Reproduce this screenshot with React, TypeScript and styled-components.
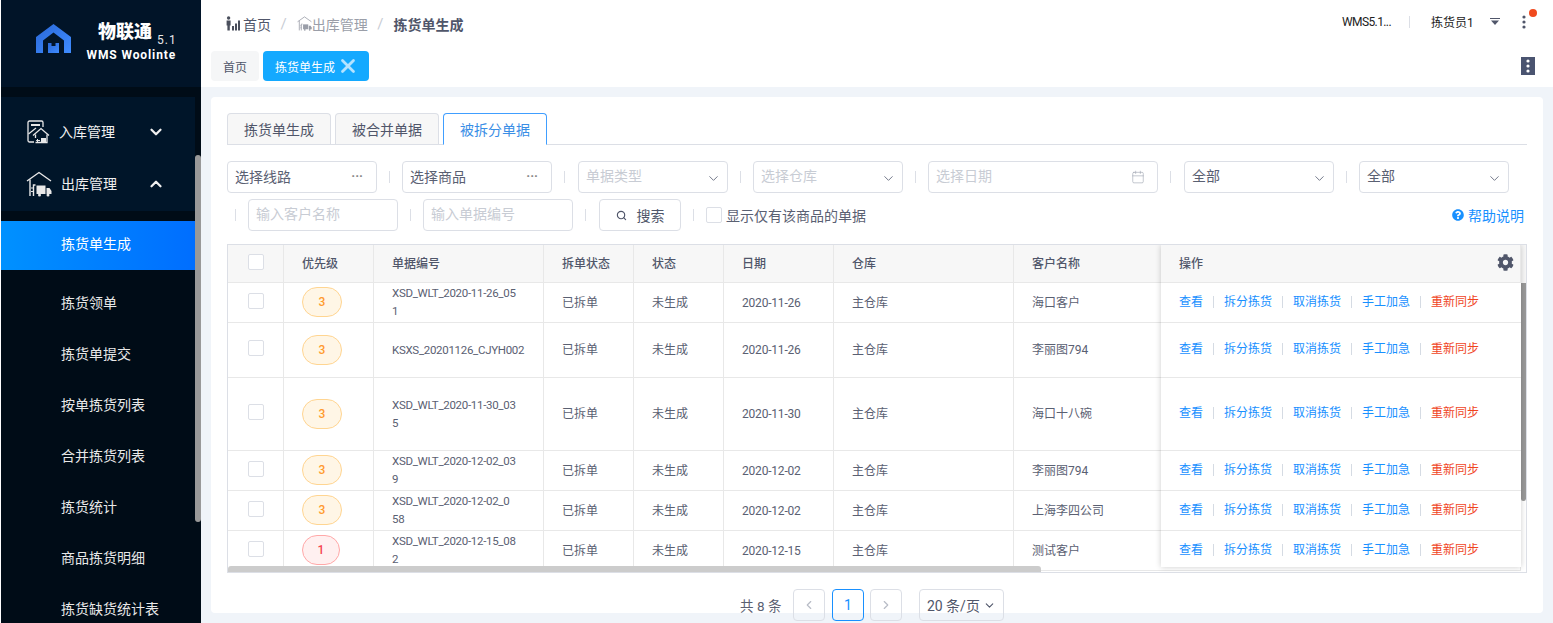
import React from 'react';
import styled, { createGlobalStyle } from 'styled-components';
import { Calendar, ChevronDown, ChevronLeft, ChevronRight, ChevronUp, Search, X } from 'lucide-react';
import { FaCog, FaQuestionCircle } from 'react-icons/fa';

const GlobalStyle = createGlobalStyle`
  html, body {
    margin: 0;
    padding: 0;
    height: 100%;
    overflow: hidden;
    background: #fff;
  }
  body {
    font-family: Roboto, "Noto Sans CJK SC", sans-serif;
    font-size: 14px;
    color: #50566a;
  }
  * {
    box-sizing: border-box;
  }
`;

interface Row {
  level: number;
  code: string;
  date: string;
  customer: string;
  height: number;
}

const rows: Row[] = [
  { level: 3, code: 'XSD_WLT_2020-11-26_05\n1', date: '2020-11-26', customer: '海口客户', height: 40 },
  { level: 3, code: 'KSXS_20201126_CJYH002', date: '2020-11-26', customer: '李丽图794', height: 55 },
  { level: 3, code: 'XSD_WLT_2020-11-30_03\n5', date: '2020-11-30', customer: '海口十八碗', height: 73 },
  { level: 3, code: 'XSD_WLT_2020-12-02_03\n9', date: '2020-12-02', customer: '李丽图794', height: 40 },
  { level: 3, code: 'XSD_WLT_2020-12-02_0\n58', date: '2020-12-02', customer: '上海李四公司', height: 40 },
  { level: 1, code: 'XSD_WLT_2020-12-15_08\n2', date: '2020-12-15', customer: '测试客户', height: 40 },
];

const subMenu = ['拣货领单', '拣货单提交', '按单拣货列表', '合并拣货列表', '拣货统计', '商品拣货明细', '拣货缺货统计表'];
const actions = ['查看', '拆分拣货', '取消拣货', '手工加急'];

const LogoIcon = () => (
  <svg width="35" height="29" viewBox="0 0 35 29">
    <defs>
      <linearGradient id="logoBlue" x1="0" y1="0" x2="1" y2="1">
        <stop offset="0" stopColor="#2a68d8" />
        <stop offset="1" stopColor="#3f8cff" />
      </linearGradient>
    </defs>
    <path d="M17.5 0L35 13V29H28V16.5L17.5 8.5L7 16.5V29H0V13Z" fill="url(#logoBlue)" />
    <path d="M12 19H15.5V22H19.5V19H23V29H12Z" fill="url(#logoBlue)" />
  </svg>
);

const InboundIcon = () => (
  <svg width="24" height="24" viewBox="0 0 24 24" fill="none" stroke="#e8e8e8" strokeWidth="1.3">
    <path d="M8 22H3.5A1.5 1.5 0 0 1 2 20.5V2.5A1.5 1.5 0 0 1 3.5 1H15.5A1.5 1.5 0 0 1 17 2.5V7" />
    <path d="M5 5H14" strokeWidth="2" />
    <path d="M2.5 14L10 8" />
    <path d="M7 15.5L15 8.5L23 15.5" />
    <path d="M9.5 14.5V18M21 14.5V22.5H9.5" />
    <path d="M15 18H20V22H15Z" fill="#e8e8e8" stroke="none" />
    <path d="M14 20.5H10.5M12 19L10.5 20.5L12 22" strokeWidth="1" />
  </svg>
);

const OutboundIcon = ({ size = 26, color = '#e8e8e8' }: { size?: number; color?: string }) => (
  <svg width={size} height={size} viewBox="0 0 26 26" fill="none" stroke={color} strokeWidth="1.4">
    <path d="M1 10L13 1.5L25 10" />
    <path d="M4 8.5V25M7.5 25V14H9.5" />
    <path d="M5 17H8M5 20.5H8" strokeWidth="1" />
    <path d="M10.5 14.5H19.5V23H10.5Z" fill={color} stroke="none" />
    <path d="M20.5 17H23.5L25.5 20V23H20.5Z" fill={color} stroke="none" />
    <circle cx="13.5" cy="24" r="1.5" fill={color} stroke="none" />
    <circle cx="22" cy="24" r="1.5" fill={color} stroke="none" />
  </svg>
);

const HomeIcon = () => (
  <svg width="15" height="15" viewBox="0 0 15 15" fill="#4a4f5c">
    <circle cx="2.6" cy="2" r="1.7" />
    <path d="M0.6 4.5H4.6V9.5H3.8V14.5H1.4V9.5H0.6Z" />
    <path d="M6 10H8V14.5H6ZM9 7.5H11V14.5H9ZM12 4.5H14V14.5H12Z" />
  </svg>
);

const HeaderCaret = () => (
  <svg width="10" height="7" viewBox="0 0 10 7" fill="#50566a">
    <path d="M0 0H10V1H0Z" />
    <path d="M1 2.5H9L5 7Z" />
  </svg>
);

const Dots = ({ color }: { color: string }) => (
  <svg width="4" height="14" viewBox="0 0 4 14" fill={color}>
    <circle cx="2" cy="2" r="1.6" />
    <circle cx="2" cy="7" r="1.6" />
    <circle cx="2" cy="12" r="1.6" />
  </svg>
);

const App: React.FC = () => {
  return (
    <Layout>
      <GlobalStyle />
      <Sidebar>
        <LogoBar>
          <LogoIcon />
          <LogoText>
            <LogoTitle>
              物联通<LogoVersion>5.1</LogoVersion>
            </LogoTitle>
            <LogoSub>WMS Woolinte</LogoSub>
          </LogoText>
        </LogoBar>
        <MenuArea>
          <MenuList>
            <MenuGroup>
              <MenuTitle>
                <InboundIcon />
                <MenuTitleText>入库管理</MenuTitleText>
                <ChevronDown size={18} strokeWidth={3} />
              </MenuTitle>
              <MenuTitle>
                <OutboundIcon />
                <MenuTitleText>出库管理</MenuTitleText>
                <ChevronUp size={18} strokeWidth={3} />
              </MenuTitle>
            </MenuGroup>
            <ActiveItem>拣货单生成</ActiveItem>
            {subMenu.map((name) => (
              <SubItem key={name}>{name}</SubItem>
            ))}
          </MenuList>
          <MenuTrack>
            <MenuThumb />
          </MenuTrack>
        </MenuArea>
      </Sidebar>
      <Main>
        <Header>
          <TopBar>
            <Breadcrumb>
              <HomeIcon />
              <CrumbLink>首页</CrumbLink>
              <CrumbSlash>/</CrumbSlash>
              <OutboundIcon size={15} color="#9a9ea8" />
              <CrumbMuted>出库管理</CrumbMuted>
              <CrumbSlash>/</CrumbSlash>
              <CrumbCurrent>拣货单生成</CrumbCurrent>
            </Breadcrumb>
            <UserBar>
              <VersionText>WMS5.1...</VersionText>
              <UserDivider />
              <UserName>拣货员1</UserName>
              <CaretWrap>
                <HeaderCaret />
              </CaretWrap>
              <MoreWrap>
                <Dots color="#50566a" />
                <RedDot />
              </MoreWrap>
            </UserBar>
          </TopBar>
          <TagBar>
            <Tag>首页</Tag>
            <Tag $active>
              拣货单生成
              <TagClose size={22} strokeWidth={3} color="#b5e3ff" />
            </Tag>
            <TagMenu>
              <Dots color="#fff" />
            </TagMenu>
          </TagBar>
        </Header>
        <Content>
          <Card>
            <Tabs>
              <TabItem>拣货单生成</TabItem>
              <TabItem>被合并单据</TabItem>
              <TabItem $active>被拆分单据</TabItem>
            </Tabs>
            <FilterRow>
              <Field>
                <FieldText>选择线路</FieldText>
                <More>···</More>
              </Field>
              <Sep />
              <Field>
                <FieldText>选择商品</FieldText>
                <More>···</More>
              </Field>
              <Sep $wide />
              <Field>
                <FieldText $placeholder $raised>单据类型</FieldText>
                <FieldArrow size={15} strokeWidth={1.5} />
              </Field>
              <Sep />
              <Field>
                <FieldText $placeholder $raised>选择仓库</FieldText>
                <FieldArrow size={15} strokeWidth={1.5} />
              </Field>
              <Sep />
              <Field $width={230}>
                <FieldText $placeholder $raised>选择日期</FieldText>
                <FieldCalendar size={14} strokeWidth={1} color="#9aa0ac" />
              </Field>
              <Sep $wide />
              <Field>
                <FieldText $raised>全部</FieldText>
                <FieldArrow size={15} strokeWidth={1.5} />
              </Field>
              <Sep />
              <Field>
                <FieldText $raised>全部</FieldText>
                <FieldArrow size={15} strokeWidth={1.5} />
              </Field>
            </FilterRow>
            <FilterRow $second>
              <Sep />
              <Field>
                <FieldText $placeholder $raised>输入客户名称</FieldText>
              </Field>
              <Sep />
              <Field>
                <FieldText $placeholder $raised>输入单据编号</FieldText>
              </Field>
              <Sep $wide />
              <SearchButton>
                <Search size={11} strokeWidth={2.5} />
                搜索
              </SearchButton>
              <Sep />
              <CheckLabel>
                <CheckBox />
                显示仅有该商品的单据
              </CheckLabel>
              <HelpLink>
                <FaQuestionCircle size={12} />
                帮助说明
              </HelpLink>
            </FilterRow>
            <TableBox>
              <TableScroll>
                <DataTable>
                  <thead>
                    <tr>
                      <HeadCell $w={56} $center>
                        <CheckBox />
                      </HeadCell>
                      <HeadCell $w={90}>优先级</HeadCell>
                      <HeadCell $w={170}>单据编号</HeadCell>
                      <HeadCell $w={90}>拆单状态</HeadCell>
                      <HeadCell $w={90}>状态</HeadCell>
                      <HeadCell $w={110}>日期</HeadCell>
                      <HeadCell $w={180}>仓库</HeadCell>
                      <HeadCell $w={507}>客户名称</HeadCell>
                    </tr>
                  </thead>
                  <tbody>
                    {rows.map((row) => (
                      <BodyRow key={row.code} $h={row.height}>
                        <BodyCell $center>
                          <CheckBox />
                        </BodyCell>
                        <BodyCell>
                          <LevelBadge $level={row.level}>{row.level}</LevelBadge>
                        </BodyCell>
                        <CodeCell>{row.code}</CodeCell>
                        <BodyCell>已拆单</BodyCell>
                        <BodyCell>未生成</BodyCell>
                        <DateCell>{row.date}</DateCell>
                        <BodyCell>主仓库</BodyCell>
                        <BodyCell>{row.customer}</BodyCell>
                      </BodyRow>
                    ))}
                  </tbody>
                </DataTable>
              </TableScroll>
              <VerticalBar>
                <VerticalThumb />
              </VerticalBar>
              <FixedColumn>
                <DataTable>
                  <thead>
                    <tr>
                      <HeadCell $w={360}>
                        <ActionHead>
                          操作
                          <FaCog size={17} color="#50566a" />
                        </ActionHead>
                      </HeadCell>
                    </tr>
                  </thead>
                  <tbody>
                    {rows.map((row) => (
                      <BodyRow key={row.code} $h={row.height}>
                        <BodyCell $noLine>
                          <Actions>
                            {actions.map((name) => (
                              <React.Fragment key={name}>
                                <ActionLink>{name}</ActionLink>
                                <ActionSep />
                              </React.Fragment>
                            ))}
                            <ActionLink $danger>重新同步</ActionLink>
                          </Actions>
                        </BodyCell>
                      </BodyRow>
                    ))}
                  </tbody>
                </DataTable>
              </FixedColumn>
              <HorizontalBar>
                <HorizontalThumb />
              </HorizontalBar>
            </TableBox>
            <Pagination>
              <PageTotal>共 8 条</PageTotal>
              <PageButton $disabled>
                <ChevronLeft size={14} />
              </PageButton>
              <PageButton $active>1</PageButton>
              <PageButton $disabled>
                <ChevronRight size={14} />
              </PageButton>
              <PageSize>
                20 条/页
                <ChevronDown size={13} />
              </PageSize>
            </Pagination>
          </Card>
        </Content>
      </Main>
    </Layout>
  );
};

export default App;

const Layout = styled.div`
  display: flex;
  height: 100vh;
  padding-left: 1px;
  overflow: hidden;
`;

const Sidebar = styled.aside`
  flex: 0 0 200px;
  display: flex;
  flex-direction: column;
  background: #000c17;
`;

const LogoBar = styled.div`
  flex: 0 0 87px;
  display: flex;
  align-items: flex-start;
  gap: 15px;
  padding: 24px 0 0 35px;
  background: #011428;
`;

const LogoText = styled.div`
  display: flex;
  flex-direction: column;
  align-items: center;
  margin-top: -3px;
  color: #fff;
`;

const LogoTitle = styled.div`
  display: flex;
  align-items: flex-end;
  font-size: 18px;
  font-weight: 900;
  line-height: 22px;
  padding-left: 12px;
`;

const LogoVersion = styled.span`
  font-size: 12px;
  font-weight: 400;
  line-height: 14px;
  letter-spacing: 1px;
  margin: 0 0 -4px 5px;
  color: #e8e8e8;
`;

const LogoSub = styled.div`
  margin-top: 5px;
  font-size: 12px;
  font-weight: 700;
  line-height: 14px;
  letter-spacing: 0.9px;
  white-space: nowrap;
`;

const MenuArea = styled.div`
  flex: 1;
  display: flex;
  min-height: 0;
`;

const MenuList = styled.nav`
  flex: 0 0 194px;
  padding-top: 10px;
  overflow: hidden;
`;

const MenuGroup = styled.div`
  height: 114px;
  padding-top: 9px;
  background: #001529;
`;

const MenuTitle = styled.div`
  display: flex;
  align-items: center;
  height: 52px;
  padding: 0 30px 0 25px;
  color: #f0f0f0;
`;

const MenuTitleText = styled.span`
  flex: 1;
  margin: -2px 0 0 9px;
`;

const ActiveItem = styled.div`
  display: flex;
  align-items: center;
  height: 49px;
  margin: 10px 0 7px;
  padding: 0 0 6px 60px;
  background: linear-gradient(90deg, #0091ff, #006eff);
  color: #fff;
`;

const SubItem = styled.div`
  display: flex;
  align-items: center;
  height: 51.15px;
  padding: 0 0 2px 60px;
  color: #e8e8e8;
`;

const MenuTrack = styled.div`
  flex: 0 0 6px;
`;

const MenuThumb = styled.div`
  width: 6px;
  height: 367px;
  margin-top: 68px;
  border-radius: 3px;
  background: #999;
`;

const Main = styled.main`
  flex: 1;
  min-width: 0;
  display: flex;
  flex-direction: column;
`;

const Header = styled.header`
  flex: 0 0 87px;
  background: #fff;
`;

const TopBar = styled.div`
  display: flex;
  align-items: center;
  justify-content: space-between;
  height: 51px;
  padding-left: 25px;
`;

const Breadcrumb = styled.div`
  display: flex;
  align-items: center;
  padding-bottom: 4px;
`;

const CrumbLink = styled.span`
  margin-left: 2px;
  color: #50566a;
`;

const CrumbSlash = styled.span`
  margin: 0 10px 0 9.5px;
  color: #c8ccd4;
  font-size: 15px;
`;

const CrumbMuted = styled.span`
  color: #9a9ea8;
`;

const CrumbCurrent = styled.span`
  color: #50566a;
  font-weight: 700;
`;

const UserBar = styled.div`
  display: flex;
  align-items: center;
  padding: 0 27px 8px 0;
  font-size: 12px;
  color: #222;
`;

const VersionText = styled.span`
  width: 47px;
  letter-spacing: -0.6px;
  white-space: nowrap;
`;

const UserDivider = styled.span`
  width: 1px;
  height: 12px;
  margin: 0 21px 0 20px;
  background: #dcdfe6;
`;

const UserName = styled.span`
  width: 41px;
  white-space: nowrap;
`;

const CaretWrap = styled.span`
  display: flex;
  margin-left: 18px;
`;

const MoreWrap = styled.span`
  position: relative;
  display: flex;
  margin-left: 22px;
`;

const RedDot = styled.span`
  position: absolute;
  top: -6px;
  left: 7px;
  width: 8px;
  height: 8px;
  border-radius: 50%;
  background: #f04a1e;
`;

const TagBar = styled.div`
  display: flex;
  align-items: center;
  gap: 4px;
  padding: 0 18px 0 10px;
`;

const Tag = styled.div<{ $active?: boolean }>`
  display: flex;
  align-items: center;
  height: 30px;
  padding: 0 12px;
  border-radius: 4px;
  font-size: 12px;
  background: ${(p) => (p.$active ? '#14a9ff' : '#f5f6f7')};
  color: ${(p) => (p.$active ? '#fff' : '#50566a')};
`;

const TagClose = styled(X)`
  margin: 0 -2px 0 2px;
`;

const TagMenu = styled.div`
  display: flex;
  align-items: center;
  justify-content: center;
  width: 14px;
  height: 18px;
  margin-left: auto;
  background: #4a5470;
`;

const Content = styled.div`
  flex: 1;
  min-height: 0;
  padding: 10px;
  background: #f0f4f9;
`;

const Card = styled.section`
  height: 100%;
  padding: 16px;
  border-radius: 4px;
  background: #fff;
`;

const Tabs = styled.div`
  display: flex;
  gap: 4px;
  height: 32px;
  border-bottom: 1px solid #dcdfe6;
`;

const TabItem = styled.div<{ $active?: boolean }>`
  display: flex;
  align-items: center;
  justify-content: center;
  width: 104px;
  height: ${(p) => (p.$active ? '32px' : '31px')};
  border: 1px solid ${(p) => (p.$active ? '#409eff' : '#dcdfe6')};
  border-bottom: ${(p) => (p.$active ? '1px solid #fff' : '0')};
  border-radius: 4px 4px 0 0;
  background: ${(p) => (p.$active ? '#fff' : '#f7f7f7')};
  color: ${(p) => (p.$active ? '#3a8ee6' : '#50566a')};
`;

const FilterRow = styled.div<{ $second?: boolean }>`
  display: flex;
  align-items: center;
  height: 32px;
  margin-top: ${(p) => (p.$second ? '6px' : '16px')};
  ${(p) => p.$second && 'padding-left: 8px;'}
`;

const Sep = styled.span<{ $wide?: boolean }>`
  flex: none;
  width: 1px;
  height: 12px;
  margin: 0 ${(p) => (p.$wide ? '13px' : '12px')} 0 12px;
  background: #dcdfe6;

  ${FilterRow} > &:first-child {
    margin-left: 0;
  }
`;

const Field = styled.div<{ $width?: number }>`
  flex: none;
  display: flex;
  align-items: center;
  justify-content: space-between;
  width: ${(p) => p.$width ?? 150}px;
  height: 32px;
  padding: 0 6px 3px 7px;
  border: 1px solid #dcdfe6;
  border-radius: 4px;
  color: #6b7183;
`;

const FieldText = styled.span<{ $placeholder?: boolean; $raised?: boolean }>`
  margin-top: ${(p) => (p.$raised ? '-2px' : '0')};
  color: ${(p) => (p.$placeholder ? '#c8ccd4' : '#5a6072')};
`;

const FieldArrow = styled(ChevronDown)`
  margin-top: 6px;
`;

const FieldCalendar = styled(Calendar)`
  margin: 3px 6px 0 0;
`;

const More = styled.span`
  margin-right: 7px;
  font-size: 13px;
  font-weight: 700;
  color: #888;
`;

const SearchButton = styled.button`
  flex: none;
  display: flex;
  align-items: center;
  justify-content: center;
  gap: 10px;
  width: 82px;
  height: 32px;
  border: 1px solid #dcdfe6;
  border-radius: 4px;
  background: #fff;
  font: inherit;
  color: #50566a;
`;

const CheckLabel = styled.label`
  display: flex;
  align-items: center;
  gap: 4px;
  color: #5a6072;
`;

const CheckBox = styled.span`
  display: block;
  flex: none;
  width: 16px;
  height: 16px;
  margin: 0 auto;
  border: 1px solid #dcdfe6;
  border-radius: 2px;
  background: #fff;
`;

const HelpLink = styled.a`
  display: flex;
  align-items: center;
  gap: 4px;
  margin-left: auto;
  padding-right: 3px;
  font-size: 14px;
  color: #1890ff;
`;

const TableBox = styled.div`
  position: relative;
  display: flex;
  height: 329px;
  margin-top: 13px;
  border: 1px solid #dcdfe6;
  overflow: hidden;
`;

const TableScroll = styled.div`
  flex: 0 0 1293px;
  overflow: hidden;
`;

const DataTable = styled.table`
  width: 100%;
  table-layout: fixed;
  border-collapse: separate;
  border-spacing: 0;
  font-size: 12px;
`;

const HeadCell = styled.th<{ $w: number; $center?: boolean }>`
  width: ${(p) => p.$w}px;
  height: 38px;
  padding: ${(p) => (p.$center ? '0 0 4px' : '0 18px 2px')};
  border-right: 1px solid #e8e8e8;
  border-bottom: 1px solid #e8e8e8;
  background: #f7f7f7;
  font-weight: 500;
  text-align: ${(p) => (p.$center ? 'center' : 'left')};
  color: #50566a;
`;

const BodyRow = styled.tr<{ $h: number }>`
  height: ${(p) => p.$h}px;
`;

const BodyCell = styled.td<{ $center?: boolean; $noLine?: boolean }>`
  padding: ${(p) => (p.$center ? '0 0 4px' : '0 18px')};
  border-right: ${(p) => (p.$noLine ? '0' : '1px solid #e8e8e8')};
  border-bottom: 1px solid #e8e8e8;
  line-height: 18px;
  text-align: ${(p) => (p.$center ? 'center' : 'left')};
  color: #5a6072;
`;

const CodeCell = styled(BodyCell)`
  padding: 0 0 1px 18px;
  font-size: 11.5px;
  letter-spacing: -0.3px;
  white-space: pre;
`;

const DateCell = styled(BodyCell)`
  letter-spacing: -0.2px;
`;

const LevelBadge = styled.span<{ $level: number }>`
  display: flex;
  align-items: center;
  justify-content: center;
  width: ${(p) => (p.$level === 1 ? 38 : 40)}px;
  height: 30px;
  margin-bottom: 1px;
  border: 1px solid ${(p) => (p.$level === 1 ? '#ffa8a8' : '#ffd591')};
  border-radius: 15px;
  background: ${(p) => (p.$level === 1 ? '#fff0f0' : '#fff6e6')};
  font-weight: 500;
  color: ${(p) => (p.$level === 1 ? '#f5454f' : '#ff9a2e')};
`;

const VerticalBar = styled.div`
  flex: 1;
  background: linear-gradient(#f7f7f7 38px, #fff 38px);
`;

const VerticalThumb = styled.div`
  height: 218px;
  margin-top: 38px;
  border-radius: 0 0 3px 3px;
  background: #999;
`;

const FixedColumn = styled.div`
  position: absolute;
  top: 0;
  right: 5px;
  bottom: 5px;
  width: 360px;
  overflow: hidden;
  background: #fff;
  box-shadow: 0 0 6px rgba(0, 0, 0, 0.2);
`;

const ActionHead = styled.div`
  display: flex;
  align-items: center;
  justify-content: space-between;
  margin-right: -12px;
`;

const Actions = styled.div`
  display: flex;
  align-items: center;
  padding-bottom: 2px;
`;

const ActionLink = styled.a<{ $danger?: boolean }>`
  color: ${(p) => (p.$danger ? '#f0441e' : '#1890ff')};
  white-space: nowrap;
`;

const ActionSep = styled.span`
  width: 1px;
  height: 12px;
  margin: 0 10px;
  background: #d5dbe3;
`;

const HorizontalBar = styled.div`
  position: absolute;
  left: 0;
  right: 0;
  bottom: 0;
  height: 6px;
`;

const HorizontalThumb = styled.div`
  width: 813px;
  height: 100%;
  border-radius: 3px 3px 0 0;
  background: #ccc;
`;

const Pagination = styled.div`
  display: flex;
  align-items: center;
  justify-content: center;
  gap: 6.5px;
  margin-top: 16px;
  padding-right: 10px;
`;

const PageTotal = styled.span`
  margin-right: 5.5px;
  font-size: 13.5px;
  color: #5a6072;
`;

const PageButton = styled.div<{ $active?: boolean; $disabled?: boolean }>`
  display: flex;
  align-items: center;
  justify-content: center;
  width: 32px;
  height: 32px;
  border: 1px solid ${(p) => (p.$active ? '#1890ff' : '#dcdfe6')};
  border-radius: 4px;
  color: ${(p) => (p.$active ? '#1890ff' : p.$disabled ? '#b8bcc6' : '#50566a')};
`;

const PageSize = styled.div`
  display: flex;
  align-items: center;
  justify-content: center;
  gap: 3px;
  width: 85px;
  height: 32px;
  margin-left: 10px;
  border: 1px solid #dcdfe6;
  border-radius: 4px;
  font-size: 14px;
  color: #50566a;
`;
